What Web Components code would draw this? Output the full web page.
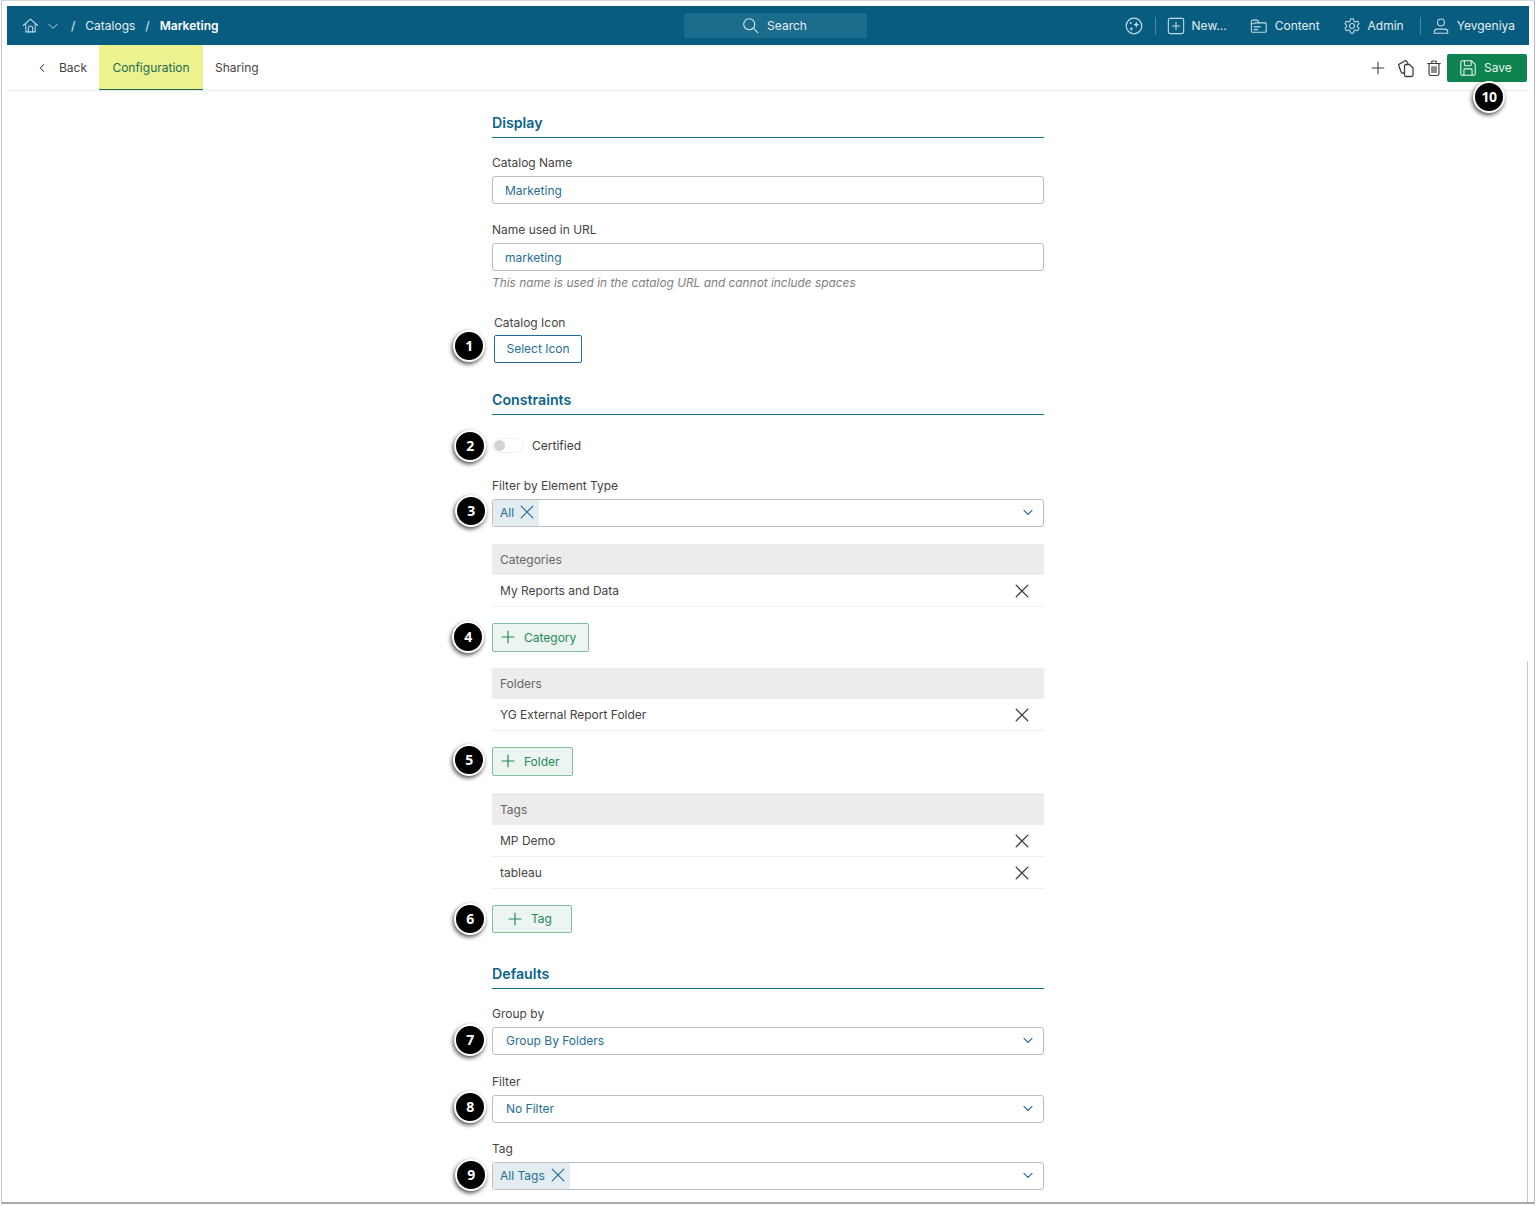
<!DOCTYPE html>
<html lang="en">
<head>
<meta charset="utf-8">
<title>Catalog configuration</title>
<style>
  html, body { margin: 0; background: #fff; }
  body { font: 12px Inter, "Liberation Sans", sans-serif; color: #3c3c3c; }
</style>
</head>
<body>
<cat-page>
  <top-bar></top-bar>
  <sub-bar></sub-bar>
  <form-body>
    <form-section title="Display" gap="17">
      <form-field label="Catalog Name"><text-box value="Marketing"></text-box></form-field>
      <form-field label="Name used in URL" top="18" hint="This name is used in the catalog URL and cannot include spaces"><text-box value="marketing"></text-box></form-field>
      <form-field label="Catalog Icon" top="24" indent="2"><plain-button>Select Icon</plain-button></form-field>
    </form-section>
    <form-section title="Constraints" top="27" gap="22">
      <toggle-row>Certified</toggle-row>
      <form-field label="Filter by Element Type" top="25"><select-box chip="All"></select-box></form-field>
      <item-list title="Categories" top="17"><list-row>My Reports and Data</list-row></item-list>
      <add-button top="16">Category</add-button>
      <item-list title="Folders" top="16"><list-row>YG External Report Folder</list-row></item-list>
      <add-button top="16">Folder</add-button>
      <item-list title="Tags" top="17" head="32"><list-row>MP Demo</list-row><list-row>tableau</list-row></item-list>
      <add-button top="16" wide style="height:28px">Tag</add-button>
    </form-section>
    <form-section title="Defaults" top="31" gap="17">
      <form-field label="Group by"><select-box value="Group By Folders"></select-box></form-field>
      <form-field label="Filter" top="19"><select-box value="No Filter"></select-box></form-field>
      <form-field label="Tag" top="18"><select-box chip="All Tags"></select-box></form-field>
    </form-section>
  </form-body>
  <step-badge x="469" y="346">1</step-badge>
  <step-badge x="470" y="446">2</step-badge>
  <step-badge x="471" y="511">3</step-badge>
  <step-badge x="468" y="637">4</step-badge>
  <step-badge x="469" y="760">5</step-badge>
  <step-badge x="470" y="919">6</step-badge>
  <step-badge x="470" y="1040">7</step-badge>
  <step-badge x="470" y="1107">8</step-badge>
  <step-badge x="471" y="1175">9</step-badge>
  <step-badge x="1489" y="97">10</step-badge>
</cat-page>

<script>
// little helper, every element gets an open shadow root
function shadow(el, html) {
  el.attachShadow({ mode: 'open' }).innerHTML = html;
}

// icon strokes
const icons = {
  home: '<path d="M1.500 10 10 2.500l8.500 7.500"/><path d="M4.500 8v9.500h11V8"/><path d="M7.500 17.500V13a2.500 2.500 0 0 1 5 0v4.500"/>',
  chevron: '<path d="M5 8l5 5 5-5"/>',
  back: '<path d="M12.500 5l-5 5 5 5"/>',
  search: '<circle cx="8.500" cy="8.500" r="6.500"/><path d="M13.500 13.500l5 5"/>',
  stars: '<circle cx="10" cy="10" r="7.800"/><path d="M12.300 5.500l.9 2.200 2.200.9-2.200.9-.9 2.200-.9-2.200-2.200-.9 2.200-.9z" fill="currentColor" stroke="none"/><path d="M7.300 10.800l.6 1.500 1.500.6-1.500.6-.6 1.500-.6-1.500-1.500-.6 1.500-.6z" fill="currentColor" stroke="none"/><circle cx="6.800" cy="7" r="1" fill="currentColor" stroke="none"/>',
  plusbox: '<rect x="1.500" y="1.500" width="17" height="17" rx="2"/><path d="M10 6v8M6 10h8"/>',
  folder: '<path d="M1.500 5q0-1.500 1.500-1.500h4.500q1 0 1.500 1l1 2h7q1 0 1 1v8q0 1.500-1.500 1.500H3q-1.500 0-1.500-1.500z"/><path d="M10 6.500h-4q-1 0-1.500 1h-3"/><path d="M4.500 11h7M4.500 14h4"/>',
  gear: '<path d="M8.500 2h3l.6 2.500 1.700 1 2.500-.7 1.500 2.600L16 9.200v1.600l1.800 1.800-1.500 2.600-2.500-.7-1.700 1-.6 2.500h-3l-.6-2.500-1.700-1-2.500.7-1.500-2.600L4 10.800V9.200L2.200 7.400l1.500-2.600 2.500.7 1.700-1z"/><circle cx="10" cy="10" r="2.800"/>',
  user: '<circle cx="10" cy="6" r="3.800"/><path d="M2.500 18v-1.500q0-3 3.500-3h8q3.500 0 3.500 3V18z"/>',
  plus: '<path d="M10 3.500v13M3.500 10h13"/>',
  copy: '<path d="M8.500 15H6.500q-1 0-1.400-1L2.700 7.600q-.4-1 .6-1.500l5.800-3.300q1-.5 1.500.4l1.400 2.800"/><path d="M8.500 8q0-1.500 1.500-1.500h3.500L17 10v7q0 1.500-1.500 1.500H10q-1.500 0-1.500-1.500z"/>',
  trash: '<path d="M3 5h14"/><path d="M7.500 5V3q0-.8.8-.8h3.400q.8 0 .8.8v2"/><path d="M4.500 5v11.500q0 1.800 1.800 1.800h7.400q1.800 0 1.800-1.800V5"/><path d="M7.800 8.500v6.500M10 8.500v6.500M12.200 8.500v6.500"/>',
  save: '<path d="M2 4q0-2 2-2h10l4 4v10q0 2-2 2H4q-2 0-2-2z"/><path d="M6 2v4.500q0 1 1 1h5.500q1 0 1-1V2.300"/><path d="M5.500 18v-6q0-1 1-1h7q1 0 1 1v6"/>',
  close: '<path d="M3.500 3.500l13 13M16.500 3.500l-13 13"/>'
};

class AppIcon extends HTMLElement {
  connectedCallback() {
    const size = this.getAttribute('size') || 16;
    const sw = this.getAttribute('sw') || 1.2;
    shadow(this, `<style>:host{display:inline-flex;flex:none}svg{display:block}</style>
      <svg width="${size}" height="${size}" viewBox="0 0 20 20" fill="none" stroke="currentColor" stroke-width="${sw}" stroke-linejoin="round" stroke-linecap="round">${icons[this.getAttribute('name')]}</svg>`);
  }
}
customElements.define('app-icon', AppIcon);

class CatPage extends HTMLElement {
  constructor() {
    super();
    shadow(this, `<style>
      :host{display:block;position:relative;box-sizing:border-box;height:1204px;margin:0 1px;padding:5px 5px 0;
        border-top:1px solid #d8d8d8;border-left:1px solid #c6c6c6;border-right:1px solid #bcbcbc;border-bottom:2px solid #a9a9a9;overflow:hidden}
      .track{position:absolute;left:1525px;top:660px;bottom:0;width:1px;background:#c9c9c9}
    </style><slot></slot><div class="track"></div>`);
  }
}
customElements.define('cat-page', CatPage);

class TopBar extends HTMLElement {
  constructor() {
    super();
    shadow(this, `<style>
      :host{display:grid;grid-template-columns:677px 183px 1fr;align-items:center;height:39px;background:#085c80;color:#e4eef3;font-size:12px}
      .left,.right{display:flex;align-items:center}
      .left{padding-left:15px}
      .right{justify-content:flex-end;padding-right:14px}
      .left app-icon,.right app-icon{color:#c3dbe6}
      .sl{margin:0 10px}
      b{font-weight:600;color:#fff}
      .search{display:flex;align-items:center;justify-content:center;gap:8px;height:25px;padding-right:2px;background:#1c6c8e;border-radius:2px}
      .item{display:flex;align-items:center;gap:7px;white-space:nowrap}
      .sep{width:1px;height:18px;background:#4d8aa5}
    </style>
    <div class="left">
      <app-icon name="home" size="17"></app-icon>
      <app-icon name="chevron" size="16" style="margin-left:6px"></app-icon>
      <span class="sl">/</span><span>Catalogs</span><span class="sl">/</span><b>Marketing</b>
    </div>
    <div class="search"><app-icon name="search" size="17"></app-icon><span>Search</span></div>
    <div class="right">
      <app-icon name="stars" size="20"></app-icon>
      <span class="sep" style="margin:0 11px"></span>
      <span class="item"><app-icon name="plusbox" size="18"></app-icon>New...</span>
      <span class="item" style="margin-left:23px"><app-icon name="folder" size="18"></app-icon>Content</span>
      <span class="item" style="margin-left:23px"><app-icon name="gear" size="18"></app-icon>Admin</span>
      <span class="sep" style="margin:0 11px 0 16px"></span>
      <span class="item"><app-icon name="user" size="18"></app-icon>Yevgeniya</span>
    </div>`);
  }
}
customElements.define('top-bar', TopBar);

class SubBar extends HTMLElement {
  constructor() {
    super();
    shadow(this, `<style>
      :host{display:flex;align-items:stretch;height:46px;box-sizing:border-box;border-bottom:1px solid #ececec;color:#444;font-size:12px}
      .back{display:flex;align-items:center;gap:10px;padding-left:28px;width:64px}
      .tab{display:flex;align-items:center;padding:0 12px}
      .on{width:80px;background:#ecf38e;color:#1f6b55;box-shadow:inset 0 -1px 0 #1c6b52;justify-content:center}
      .tools{margin-left:auto;display:flex;align-items:center;padding-right:2px;color:#3f3f3f}
      .save{display:flex;align-items:center;gap:7px;box-sizing:border-box;width:80px;height:28px;margin-left:4px;padding-left:12px;background:#0e824f;color:#e9f5ef;border-radius:2px}
    </style>
    <div class="back"><app-icon name="back" size="14" sw="1.500"></app-icon>Back</div>
    <div class="tab on">Configuration</div>
    <div class="tab">Sharing</div>
    <div class="tools">
      <app-icon name="plus" size="18"></app-icon>
      <app-icon name="copy" size="20" sw="1.300" style="margin-left:9px"></app-icon>
      <app-icon name="trash" size="18" sw="1.300" style="margin-left:9px"></app-icon>
      <div class="save"><app-icon name="save" size="18"></app-icon>Save</div>
    </div>`);
  }
}
customElements.define('sub-bar', SubBar);

class FormBody extends HTMLElement {
  constructor() {
    super();
    shadow(this, `<style>:host{display:block;width:552px;margin:0 auto;padding-top:22px}</style><slot></slot>`);
  }
}
customElements.define('form-body', FormBody);

class FormSection extends HTMLElement {
  connectedCallback() {
    const gap = this.getAttribute('gap') || 13;
    shadow(this, `<style>
      :host{display:block;margin-top:${this.getAttribute('top') || 0}px}
      h2{margin:0 0 ${gap}px;height:24px;font-size:14.200px;line-height:19px;font-weight:600;color:#0b6389;border-bottom:1px solid #156e92}
    </style><h2>${this.getAttribute('title')}</h2><slot></slot>`);
  }
}
customElements.define('form-section', FormSection);

class FormField extends HTMLElement {
  connectedCallback() {
    const hint = this.getAttribute('hint');
    shadow(this, `<style>
      :host{display:block;margin-top:${this.getAttribute('top') || 0}px;padding-left:${this.getAttribute('indent') || 0}px}
      label{display:block;line-height:16px;margin-bottom:5px;color:#444}
      .hint{margin-top:4px;line-height:16px;font-size:11.870px;font-style:italic;color:#808080}
    </style><label>${this.getAttribute('label')}</label><slot></slot>${hint ? `<div class="hint">${hint}</div>` : ''}`);
  }
}
customElements.define('form-field', FormField);

class TextBox extends HTMLElement {
  connectedCallback() {
    shadow(this, `<style>
      :host{display:flex;align-items:center;box-sizing:border-box;height:28px;padding-left:12px;border:1px solid #bdbdbd;border-radius:3px;color:#1f6f94}
    </style>${this.getAttribute('value')}`);
  }
}
customElements.define('text-box', TextBox);

class SelectBox extends HTMLElement {
  connectedCallback() {
    const chip = this.getAttribute('chip');
    const left = chip
      ? `<span class="chip">${chip}<app-icon name="close" size="18" sw="1.300"></app-icon></span>`
      : `<span class="val">${this.getAttribute('value')}</span>`;
    shadow(this, `<style>
      :host{display:flex;align-items:center;box-sizing:border-box;height:28px;border:1px solid #bdbdbd;border-radius:3px;color:#1f6f94}
      .chip{display:flex;align-items:center;gap:4px;align-self:stretch;padding:0 3px 2px 7px;background:#e2ecf1}
      .val{padding:0 0 2px 13px}
      .arrow{margin:0 7px 2px auto}
    </style>${left}<app-icon class="arrow" name="chevron" size="16" sw="1.500"></app-icon>`);
  }
}
customElements.define('select-box', SelectBox);

class PlainButton extends HTMLElement {
  constructor() {
    super();
    shadow(this, `<style>
      :host{display:inline-flex;align-items:center;justify-content:center;box-sizing:border-box;width:88px;height:28px;margin-top:-1px;padding-bottom:2px;vertical-align:top;border:1px solid #1f6f94;border-radius:2px;color:#1f6f94;background:#fff}
    </style><slot></slot>`);
  }
}
customElements.define('plain-button', PlainButton);

class ToggleRow extends HTMLElement {
  constructor() {
    super();
    shadow(this, `<style>
      :host{display:flex;align-items:center;gap:8px;height:16px}
      .sw{position:relative;width:32px;height:15px;border:1px solid #f0f0f0;border-radius:8px;box-sizing:border-box}
      .sw i{position:absolute;left:1px;top:1px;width:11px;height:11px;border-radius:50%;background:#d4d4d4}
    </style><span class="sw"><i></i></span><slot></slot>`);
  }
}
customElements.define('toggle-row', ToggleRow);

class ItemList extends HTMLElement {
  connectedCallback() {
    shadow(this, `<style>
      :host{display:block;margin-top:${this.getAttribute('top') || 0}px}
      .head{display:flex;align-items:center;height:${this.getAttribute('head') || 31}px;padding-left:8px;background:#ececec;color:#666;border-radius:2px 2px 0 0}
    </style><div class="head">${this.getAttribute('title')}</div><slot></slot>`);
  }
}
customElements.define('item-list', ItemList);

class ListRow extends HTMLElement {
  constructor() {
    super();
    shadow(this, `<style>
      :host{display:flex;align-items:center;justify-content:space-between;box-sizing:border-box;height:32px;padding:0 13px 0 8px;border-bottom:1px solid #f0f0f0;color:#444}
      app-icon{color:#333}
    </style><slot></slot><app-icon name="close" size="18" sw="1.400"></app-icon>`);
  }
}
customElements.define('list-row', ListRow);

class AddButton extends HTMLElement {
  connectedCallback() {
    const wide = this.hasAttribute('wide');
    shadow(this, `<style>
      :host{display:flex;align-items:center;gap:7px;width:max-content;box-sizing:border-box;height:29px;margin-top:${this.getAttribute('top') || 0}px;padding:0 ${wide ? 19 : 12}px 1px ${wide ? 13 : 6}px;
        background:#edf5f1;border:1px solid #7fbd9f;border-radius:2px;color:#1f8a5c}
    </style><app-icon name="plus" size="18" sw="1.300"></app-icon><slot></slot>`);
  }
}
customElements.define('add-button', AddButton);

class StepBadge extends HTMLElement {
  connectedCallback() {
    const x = this.getAttribute('x') - 2, y = this.getAttribute('y') - 1;
    shadow(this, `<style>
      :host{position:absolute;left:${x - 16}px;top:${y - 16}px;width:32px;height:32px;box-sizing:border-box;padding-bottom:1px;display:flex;align-items:center;justify-content:center;
        border-radius:50%;background:#000;border:2px solid #fff;box-shadow:-1px 2px 4px rgba(0,0,0,.7);color:#fff;font:700 14px "Open Sans","Liberation Sans",sans-serif;letter-spacing:-.5px}
    </style><slot></slot>`);
  }
}
customElements.define('step-badge', StepBadge);
</script>
</body>
</html>
